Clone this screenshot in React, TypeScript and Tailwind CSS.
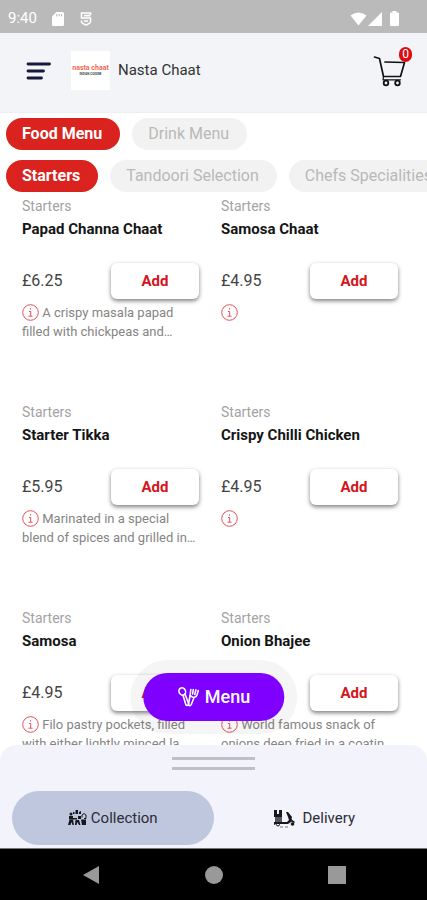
import { clsx } from "clsx";

type Dish = {
  name: string;
  price: string;
  description?: string;
};

const menus = ["Food Menu", "Drink Menu"];
const categories = ["Starters", "Tandoori Selection", "Chefs Specialities"];

const dishes: Dish[] = [
  {
    name: "Papad Channa Chaat",
    price: "£6.25",
    description: "A crispy masala papad\nfilled with chickpeas and…",
  },
  { name: "Samosa Chaat", price: "£4.95" },
  {
    name: "Starter Tikka",
    price: "£5.95",
    description: "Marinated in a special\nblend of spices and grilled in…",
  },
  { name: "Crispy Chilli Chicken", price: "£4.95" },
  {
    name: "Samosa",
    price: "£4.95",
    description: "Filo pastry pockets, filled\nwith either lightly minced la…",
  },
  {
    name: "Onion Bhajee",
    price: "£4.95",
    description: "World famous snack of\nonions deep fried in a coatin…",
  },
];

const StatusBar = () => (
  <div className="flex h-[33px] shrink-0 items-center justify-between bg-[#bababa] pt-1 pr-7 pl-2 text-white">
    <div className="flex items-center gap-3">
      <span className="w-8 text-[15px]">9:40</span>
      <svg width="12" height="14" viewBox="0 0 12 14" fill="currentColor">
        <path d="M4.5 0H10.5Q12 0 12 1.5V12.5Q12 14 10.5 14H1.5Q0 14 0 12.5V4.5Z" />
        <path d="M4.8 2v2.4M7.2 2v2.4M9.5 2v2.4" stroke="#bababa" />
      </svg>
      <svg
        className="ml-1"
        width="12"
        height="14"
        viewBox="0 0 12 14"
        fill="none"
        stroke="currentColor"
        strokeWidth="1.6"
      >
        <path d="M10.5 3V1H1.5V6H10.5V9.5Q10.5 11.5 6 13Q1.5 11.5 1.5 9.5V8.5M4 3.6H10.5M4 9H8" />
      </svg>
    </div>
    <div className="flex items-center">
      <svg width="17" height="14" viewBox="0 0 17 14" fill="currentColor">
        <path d="M8.5 13.5 .5 3.5Q8.5-2.5 16.5 3.5Z" />
      </svg>
      <svg
        className="ml-px"
        width="14"
        height="14"
        viewBox="0 0 14 14"
        fill="currentColor"
      >
        <path d="M14 0V14H0Z" />
      </svg>
      <svg
        className="ml-2"
        width="9"
        height="15"
        viewBox="0 0 9 15"
        fill="currentColor"
      >
        <path d="M2.5 0H6.5V1.5H8Q9 1.5 9 2.5V14Q9 15 8 15H1Q0 15 0 14V2.5Q0 1.5 1 1.5H2.5Z" />
      </svg>
    </div>
  </div>
);

const CartIcon = () => (
  <svg
    width="36"
    height="36"
    viewBox="0 0 36 36"
    fill="none"
    stroke="#111"
    strokeLinecap="round"
    strokeLinejoin="round"
  >
    <path d="M2.5 4 7.500 5.500 11.500 23.500H28.500L32.500 9.500" strokeWidth="1.700" />
    <path d="M13 9 32 9.500" strokeWidth="1.700" />
    <path d="M11.500 23.500 11 26.800H28.500" strokeWidth="1.200" />
    <circle cx="14" cy="30" r="2.300" strokeWidth="1.800" />
    <circle cx="25.500" cy="30" r="2.300" strokeWidth="1.800" />
  </svg>
);

const Header = () => (
  <header className="flex h-20 shrink-0 items-center border-b border-[#eceef0] bg-[#f2f4f7] pr-[15px] pb-1 pl-[26px]">
    <button aria-label="Open navigation">
      <svg
        width="26"
        height="20"
        viewBox="0 0 26 20"
        stroke="#17183a"
        strokeWidth="2.800"
        strokeLinecap="round"
      >
        <path d="M2 3H23.500M2 10H17.500M2 17H15.500" />
      </svg>
    </button>
    <div className="ml-[19px] flex size-[39px] flex-col items-center justify-center bg-white">
      <span className="text-[7px] leading-[7px] font-bold text-[#ef6a58]">
        nasta chaat
      </span>
      <span className="text-[3px] leading-[4px] font-bold text-[#444]">
        INDIAN CUISINE
      </span>
    </div>
    <h1 className="ml-2 text-[15px] text-[#333]">Nasta Chaat</h1>
    <button aria-label="Cart" className="relative ml-auto pr-1">
      <CartIcon />
      <span className="absolute -top-1.5 right-0 flex h-[15px] w-[13px] items-center justify-center rounded-full bg-[#d90d12] text-xs text-white">
        0
      </span>
    </button>
  </header>
);

const PillRow = ({ items }: { items: string[] }) => (
  <div className="flex gap-3 overflow-hidden pl-[6px]">
    {items.map((item, index) => (
      <button
        key={item}
        className={clsx(
          "h-8 shrink-0 rounded-full pr-[18px] pl-4 text-base whitespace-nowrap",
          index === 0
            ? "bg-[#da231e] font-bold text-white"
            : "bg-[#f2f2f2] text-[#b9b9b9]"
        )}
      >
        {item}
      </button>
    ))}
  </div>
);

const InfoIcon = () => (
  <svg
    className="inline-block align-[-4px]"
    width="17"
    height="17"
    viewBox="0 0 17 17"
    fill="none"
    stroke="#e2525a"
  >
    <circle cx="8.500" cy="8.500" r="7.800" />
    <path d="M8.500 4.200V5.500M7 7.500H8.700V12M6.500 12.200H10.500" />
  </svg>
);

const DishCard = ({ name, price, description }: Dish) => (
  <article>
    <p className="text-sm leading-[18px] text-[#a3a3a3]">Starters</p>
    <h2 className="mt-1 text-[15px] leading-5 font-bold whitespace-nowrap text-[#151515]">
      {name}
    </h2>
    <div className="mt-6 flex items-center justify-between">
      <span className="text-base text-[#444]">{price}</span>
      <button className="h-9 w-[88px] rounded-md bg-white text-[15px] font-bold text-[#d3161b] shadow-[0_2px_4px_rgba(0,0,0,0.5)]">
        Add
      </button>
    </div>
    <p className="mt-1 text-[13px] leading-[19px] whitespace-pre-line text-[#858585]">
      <InfoIcon /> {description}
    </p>
  </article>
);

const MenuIcon = () => (
  <svg
    width="22"
    height="22"
    viewBox="0 0 22 22"
    fill="none"
    stroke="currentColor"
    strokeWidth="1.600"
    strokeLinecap="round"
    strokeLinejoin="round"
  >
    <ellipse cx="5" cy="5.500" rx="3.200" ry="3.700" transform="rotate(-30 5 5.500)" />
    <path d="M5.800 9.500 8.500 18.500Q9.500 20.300 11 19L11.300 17.500 7.800 8.300" />
    <path d="M13.500 3.500 12.800 9.500 11.300 17.500 11 19Q13 20.500 14 18.500L16.800 11.500Q19 11 19.700 9L21 4.500" />
    <path d="M16 3.500 15.300 8M18.600 3.800 17.500 8.500M13 9.500Q15 11.500 16.800 11.500" />
  </svg>
);

const CollectionIcon = () => (
  <svg width="19" height="16" viewBox="0 0 19 16" fill="#17181f">
    <path d="M7.500 0h2.500v4H7.500zM5 2h1.500v2H5zM11 2l2-1v3h-2z" />
    <circle cx="3" cy="4" r="1.500" />
    <path d="M1 6h4v2h4v1.500H1zM10 6h3v3h-3z" />
    <path d="M1.500 9.500h3.500L6 15H4.500L3.500 12 2.500 15H0zM7.500 10h3.500l1.500 5H11l-1.500-3-1 3H7z" />
    <path d="M13 9.500h5V15h-4z" />
    <path d="M14 7.500V5q2-3 4 0v3.500h-2" fill="none" stroke="#17181f" />
  </svg>
);

const DeliveryIcon = () => (
  <svg width="23" height="19" viewBox="0 0 23 19" fill="#17181f">
    <path d="M1 1h3v4h2V1h3v7H1z" />
    <path d="M2 8h7v5H2z" fill="#55565f" />
    <path d="M1 13h13l2-2-1-3-2-5h2l4 5-1 5-3 2H3l-2 1z" />
    <path d="M18 10l4 3-1 1-4-2z" />
    <circle cx="5" cy="15.500" r="1.500" fill="none" stroke="#17181f" />
    <circle cx="19.500" cy="15" r="1.800" />
    <path d="M7 18h3M12 18h3" stroke="#77798a" />
  </svg>
);

const OrderSheet = () => (
  <footer className="shrink-0 bg-white">
    <div className="relative rounded-t-2xl border-b border-[#777] bg-[#f2f3fb] px-3 pt-3 pb-[3px]">
      <div className="absolute bottom-full left-1/2 mb-6 -translate-x-1/2">
        <button className="flex h-12 items-center gap-1.5 rounded-full bg-[#8000ff] px-[34px] text-lg font-medium text-white ring-[13px] ring-black/4">
          <MenuIcon />
          Menu
        </button>
      </div>
      <div className="mx-auto flex w-[83px] flex-col gap-[7px]">
        <div className="h-[3px] bg-[#bfc0c6]" />
        <div className="h-[3px] bg-[#bfc0c6]" />
      </div>
      <div className="mt-[21px] grid grid-cols-2 text-[15px] text-[#2c2c35]">
        <button className="flex h-[54px] items-center justify-center gap-1 rounded-full bg-[#bec7de]">
          <CollectionIcon />
          Collection
        </button>
        <button className="flex h-[54px] items-center justify-center gap-1.5">
          <DeliveryIcon />
          Delivery
        </button>
      </div>
    </div>
  </footer>
);

const NavigationBar = () => (
  <nav className="flex h-[51px] shrink-0 items-center justify-center gap-[105px] bg-black">
    <button aria-label="Back">
      <svg width="18" height="20" viewBox="0 0 18 20" fill="#999">
        <path d="M17 1V19L1 10Z" />
      </svg>
    </button>
    <button aria-label="Home" className="size-[18px] rounded-full bg-[#999]" />
    <button aria-label="Recent apps" className="size-[18px] bg-[#999]" />
  </nav>
);

export default function App() {
  return (
    <div className="flex h-screen flex-col overflow-hidden bg-white font-['Roboto',sans-serif]">
      <StatusBar />
      <Header />
      <div className="flex shrink-0 flex-col gap-[10px] pt-[5px]">
        <PillRow items={menus} />
        <PillRow items={categories} />
      </div>
      <main className="grid min-h-0 flex-1 auto-rows-[206px] grid-cols-2 gap-x-[22px] overflow-hidden pt-[5px] pr-[29px] pl-[22px]">
        {dishes.map((dish) => (
          <DishCard key={dish.name} {...dish} />
        ))}
      </main>
      <OrderSheet />
      <NavigationBar />
    </div>
  );
}
